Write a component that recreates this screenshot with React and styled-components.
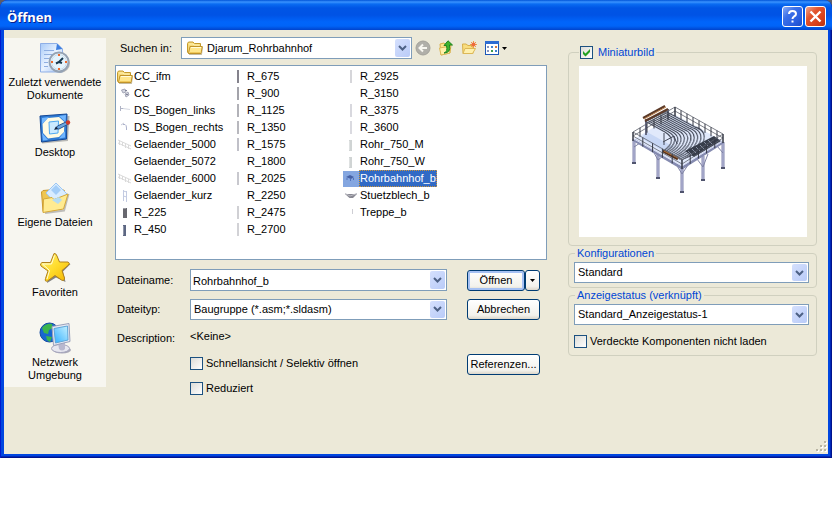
import { useState } from "react";
import styled, { createGlobalStyle } from "styled-components";

const places = [
  { label: 'Zuletzt verwendete Dokumente', icon: <RecentIcon /> },
  { label: 'Desktop', icon: <DesktopIcon /> },
  { label: 'Eigene Dateien', icon: <DocumentsIcon /> },
  { label: 'Favoriten', icon: <StarIcon /> },
  { label: 'Netzwerk Umgebung', icon: <NetworkIcon /> },
]

const files = [
  { name: 'CC_ifm', kind: 'folder' },
  { name: 'CC', kind: 'clip' },
  { name: 'DS_Bogen_links', kind: 'bendLeft' },
  { name: 'DS_Bogen_rechts', kind: 'bendRight' },
  { name: 'Gelaender_5000', kind: 'rail' },
  { name: 'Gelaender_5072' },
  { name: 'Gelaender_6000', kind: 'rail' },
  { name: 'Gelaender_kurz', kind: 'shortRail' },
  { name: 'R_225', kind: 'block' },
  { name: 'R_450', kind: 'pipe', color: '#5d6783' },
  { name: 'R_675', kind: 'bar', color: '#84828c' },
  { name: 'R_900', kind: 'bar', color: '#a3a3aa' },
  { name: 'R_1125', kind: 'bar', color: '#b2b2b8' },
  { name: 'R_1350', kind: 'bar', color: '#b8b8be' },
  { name: 'R_1575', kind: 'bar', color: '#c0c0c8' },
  { name: 'R_1800' },
  { name: 'R_2025', kind: 'bar', color: '#c8c8ce' },
  { name: 'R_2250' },
  { name: 'R_2475', kind: 'bar', color: '#d0d0d4' },
  { name: 'R_2700', kind: 'bar', color: '#d2d2d6' },
  { name: 'R_2925', kind: 'bar', color: '#d6d6da' },
  { name: 'R_3150' },
  { name: 'R_3375', kind: 'bar', color: '#d8d8de' },
  { name: 'R_3600', kind: 'bar', color: '#dadae0' },
  { name: 'Rohr_750_M', kind: 'pipe', color: '#d0d4d4' },
  { name: 'Rohr_750_W', kind: 'pipe', color: '#d0d4d4' },
  { name: 'Rohrbahnhof_b', kind: 'assembly' },
  { name: 'Stuetzblech_b', kind: 'plate' },
  { name: 'Treppe_b', kind: 'thin' },
]

function App() {
  const [selected, setSelected] = useState('Rohrbahnhof_b')
  const [fileName, setFileName] = useState('Rohrbahnhof_b')
  const [preview, setPreview] = useState(true)

  const pick = (name) => {
    setSelected(name)
    setFileName(name)
  }

  return (
    <>
      <GlobalStyle />
      <Backdrop>
        <Dialog role="dialog" aria-labelledby="title">
          <TitleBar>
            <Title id="title">Öffnen</Title>
            <CaptionButton type="button" aria-label="Hilfe">
              <svg width="19" height="19" viewBox="0 0 19 19" fill="none" stroke="#fff" strokeWidth="2">
                <path d="M6 7 Q6 4 9.500 4 Q13 4 13 7 Q13 8.500 11 9.500 Q9.500 10.500 9.500 12" />
                <path d="M9.500 13.500 V15.500" />
              </svg>
            </CaptionButton>
            <CaptionButton type="button" aria-label="Schließen" $close>
              <svg width="19" height="19" viewBox="0 0 19 19" stroke="#fff" strokeWidth="2.400">
                <path d="M4.500 4.500 L14.500 14.500 M14.500 4.500 L4.500 14.500" />
              </svg>
            </CaptionButton>
          </TitleBar>
          <Content>
            <PlacesBar>
              {places.map((place) => (
                <Place key={place.label} type="button">
                  {place.icon}
                  <span>{place.label}</span>
                </Place>
              ))}
            </PlacesBar>

            <Main>
              <LookInRow>
                <LookInLabel htmlFor="lookin">Suchen in:</LookInLabel>
                <ComboBox $grow>
                  <Select id="lookin" $withIcon>
                    <option>Djarum_Rohrbahnhof</option>
                  </Select>
                  <ComboIcon><FolderIcon /></ComboIcon>
                  <Arrow />
                </ComboBox>
                <Tools>
                  <ToolButton type="button" aria-label="Zurück"><BackIcon /></ToolButton>
                  <ToolButton type="button" aria-label="Übergeordneter Ordner"><UpIcon /></ToolButton>
                  <ToolButton type="button" aria-label="Neuer Ordner"><NewFolderIcon /></ToolButton>
                  <ToolButton type="button" aria-label="Ansicht"><ViewIcon /></ToolButton>
                </Tools>
              </LookInRow>

              <FileList>
                {files.map((file) => (
                  <li key={file.name}>
                    <FileButton type="button" onClick={() => pick(file.name)}>
                      <FileIcon kind={file.kind} color={file.color} />
                      <FileName $selected={file.name === selected}>{file.name}</FileName>
                    </FileButton>
                  </li>
                ))}
              </FileList>

              <Form>
                <label htmlFor="filename">Dateiname:</label>
                <ComboBox $tall>
                  <TextInput id="filename" value={fileName} onChange={(e) => setFileName(e.target.value)} />
                  <Arrow />
                </ComboBox>
                <SplitButton>
                  <Button type="button" $primary>Öffnen</Button>
                  <Button type="button" aria-label="Weitere Optionen">
                    <svg width="5" height="3" viewBox="0 0 5 3"><path d="M0 0 H5 L2.500 3 Z" /></svg>
                  </Button>
                </SplitButton>

                <label htmlFor="filetype">Dateityp:</label>
                <ComboBox>
                  <Select id="filetype">
                    <option>Baugruppe (*.asm;*.sldasm)</option>
                  </Select>
                  <Arrow />
                </ComboBox>
                <Button type="button">Abbrechen</Button>

                <DescriptionLabel>Description:</DescriptionLabel>
                <Description>&lt;Keine&gt;</Description>

                <QuickRow>
                  <CheckLabel>
                    <Checkbox />
                    Schnellansicht / Selektiv öffnen
                  </CheckLabel>
                </QuickRow>
                <ReferenceButton type="button">Referenzen...</ReferenceButton>

                <CheckLabel $indent>
                  <Checkbox />
                  Reduziert
                </CheckLabel>
              </Form>
            </Main>

            <Side>
              <Group $preview>
                <Legend $check>
                  <CheckLabel>
                    <Checkbox checked={preview} onChange={() => setPreview(!preview)} />
                    Miniaturbild
                  </CheckLabel>
                </Legend>
                <Preview>{preview && <PlatformDrawing />}</Preview>
              </Group>
              <Group>
                <Legend id="config">Konfigurationen</Legend>
                <ComboBox>
                  <Select aria-labelledby="config">
                    <option>Standard</option>
                  </Select>
                  <Arrow />
                </ComboBox>
              </Group>
              <Group $roomy>
                <Legend id="display">Anzeigestatus (verknüpft)</Legend>
                <ComboBox>
                  <Select aria-labelledby="display">
                    <option>Standard_Anzeigestatus-1</option>
                  </Select>
                  <Arrow />
                </ComboBox>
                <CheckLabel>
                  <Checkbox />
                  Verdeckte Komponenten nicht laden
                </CheckLabel>
              </Group>
            </Side>
          </Content>
          <Grip width="12" height="12" viewBox="0 0 12 12">
            {[[8, 0], [4, 4], [8, 4], [0, 8], [4, 8], [8, 8]].map(([x, y]) => (
              <g key={`${x}-${y}`}>
                <rect x={x + 1} y={y + 1} width="2" height="2" fill="#fff" />
                <rect x={x} y={y} width="2" height="2" fill="#b8b4a2" />
              </g>
            ))}
          </Grip>
        </Dialog>
      </Backdrop>
    </>
  )
}

function Checkbox(props) {
  return (
    <Box>
      <input type="checkbox" {...props} />
      <svg width="11" height="11" viewBox="0 0 11 11">
        <path d="M2 4 L4.500 6.500 L9 2 V5 L4.500 9.500 L2 7 Z" fill="#21a121" />
      </svg>
    </Box>
  )
}

function Arrow() {
  return (
    <ArrowBox aria-hidden="true">
      <svg width="9" height="6" viewBox="0 0 9 6" fill="none" stroke="#4d6185" strokeWidth="2">
        <path d="M1 1 L4.500 4.500 L8 1" />
      </svg>
    </ArrowBox>
  )
}

function FolderIcon() {
  return (
    <svg width="16" height="16" viewBox="0 0 16 16">
      <path d="M2 14.500 H14.500 L15.500 7" fill="none" stroke="#8b7a45" opacity=".5" />
      <path d="M.5 3.500 L1.500 2 H6 L7.500 3.500 H13.500 V6 L13 13.500 H1.500 L.5 12 Z" fill="#f6d978" stroke="#c49a2c" />
      <path d="M2 4 H6 L7 5 H12.500" fill="none" stroke="#fff3b5" />
      <path d="M3 6.500 H15.300 L14 13.500 H1.500 Z" fill="#ffe68b" stroke="#c0932a" />
      <path d="M4 7.500 H14" stroke="#fffbd9" />
      <path d="M3 12.500 H13" stroke="#f0c95a" />
    </svg>
  )
}

// small part thumbnails in the file list
function FileIcon({ kind, color }) {
  const drawings = {
    clip: (
      <g fill="none" stroke="#a5a8b8">
        <path d="M4.500 4 L8 3 L9 6 L6 7 Z M8 8 L11 6 L12 9 L9 11 Z" fill="#d3d5df" />
        <path d="M8 4.500 H10 M9 8.500 H11" stroke="#7f8296" />
      </g>
    ),
    bendLeft: (
      <g fill="none">
        <path d="M3.500 3 V8 M4 5.500 H7" stroke="#b0b4c6" />
        <path d="M6 5.500 L13 6.500" stroke="#d5d8e2" />
      </g>
    ),
    bendRight: (
      <g fill="none">
        <path d="M4 5 L7 3" stroke="#c6c9d6" />
        <path d="M6 4.500 H8 Q9.500 5 9.500 8 V10" stroke="#acb2cc" />
      </g>
    ),
    rail: (
      <g fill="none" stroke="#dadada">
        <path d="M1 3 L14 9 M1 6 L14 12" />
        <path d="M2.500 3 V8 M5.500 5 V9 M8.500 6 V11 M11.500 8 V12" />
      </g>
    ),
    shortRail: (
      <g fill="none" stroke="#c3cbe2">
        <path d="M6.500 2 V13 M9.500 3 V14 M6 3 L10 4 M6 8 L10 9" />
      </g>
    ),
    block: (
      <g>
        <rect x="6" y="3" width="4" height="10" fill="#68686f" />
        <path d="M6 3.500 H9" stroke="#9b9ba3" />
      </g>
    ),
    pipe: (
      <g>
        <rect x="6" y="3" width="3" height="11" fill={color} />
        <path d="M6.500 4 V13" stroke="#fff" opacity=".3" />
      </g>
    ),
    bar: <rect x="7" y="1" width="2" height="13" fill={color} />,
    assembly: (
      <g>
        <rect width="16" height="16" fill="#84a6e0" />
        <path d="M3 6 L7 4 L11 6 L8 8 Z" fill="#4661a5" />
        <path d="M4 7 V9 M7.500 8 V10 M10.500 7 V9" stroke="#5272ba" />
      </g>
    ),
    plate: (
      <g>
        <path d="M2 6 H14 L10 10 H6.500 Z" fill="#898993" />
        <path d="M2 5.500 L7 8 L14 5.500" fill="none" stroke="#bcbcc4" />
      </g>
    ),
    thin: <path d="M9.500 4 V9" stroke="#ceced4" />,
  }

  if (kind === 'folder') return <FolderIcon />
  return <svg width="16" height="16" viewBox="0 0 16 16" aria-hidden="true">{drawings[kind]}</svg>
}

function BackIcon() {
  return (
    <svg width="16" height="16" viewBox="0 0 16 16">
      <circle cx="8" cy="8" r="7" fill="#b0afa9" stroke="#a3a29b" />
      <path d="M12 8 H5 M8 4.500 L4.500 8 L8 11.500" fill="none" stroke="#f7f6f0" strokeWidth="2" />
    </svg>
  )
}

function UpIcon() {
  return (
    <svg width="16" height="16" viewBox="0 0 16 16">
      <path d="M2 4 L6 3 L8 5 L13 5 L12 13 L3 15 Z" fill="#fbe58d" stroke="#d8b04a" />
      <path d="M1.500 8 L10 6.500 L12 13 L3 15 Z" fill="#fff0a8" stroke="#dcb858" />
      <path d="M6 13 Q10 12 8.500 5.500 H6 L10 .8 L14.500 5 H11.500 Q13 13 6 13 Z" fill="#3fb42e" stroke="#1d8420" />
    </svg>
  )
}

function NewFolderIcon() {
  return (
    <svg width="16" height="16" viewBox="0 0 16 16">
      <path d="M1.500 4 H5 L7 5.500 H12 V13.500 H2 Z" fill="#f8dd7e" stroke="#d8b04a" />
      <path d="M4 8.500 H14.500 L11.500 13.500 H2 Z" fill="#fff0ad" stroke="#dcb858" />
      <path d="M12.500 1 V8 M9 4.500 H16 M10 2 L15 7 M15 2 L10 7" stroke="#f19a4b" />
      <circle cx="12.500" cy="4.500" r="2" fill="#ee6a3d" />
    </svg>
  )
}

function ViewIcon() {
  return (
    <svg width="24" height="16" viewBox="0 0 24 16">
      <rect x="1.500" y="1.500" width="13" height="13" fill="#fff" stroke="#1c57b8" />
      <rect x="1" y="1" width="14" height="3" fill="#2d6cd2" />
      <path d="M3 6 h2 v2 h-2z M3 10 h2 v2 h-2z" fill="#8795bd" />
      <path d="M7 6 h2 v2 h-2z M11 10 h2 v2 h-2z" fill="#3f82cf" />
      <path d="M11 6 h2 v2 h-2z" fill="#d67a3f" />
      <path d="M7 10 h2 v2 h-2z" fill="#3c9a4a" />
      <path d="M18 7 H23 L20.500 10 Z" fill="#000" />
    </svg>
  )
}

function RecentIcon() {
  return (
    <svg width="32" height="32" viewBox="0 0 32 32">
      <defs>
        <linearGradient id="paper" x1="0" y1="0" x2="1" y2="1">
          <stop offset="0" stopColor="#a9cbf8" />
          <stop offset=".5" stopColor="#eaf3ff" />
          <stop offset="1" stopColor="#9abcf0" />
        </linearGradient>
      </defs>
      <path d="M1.500 1.500 H18 L23.500 7 V30 H1.500 Z" fill="url(#paper)" stroke="#8fafe6" />
      <path d="M18 1.500 L17 8 L23.500 7 Z" fill="#3e7fe0" />
      <path d="M5 8.500 H15 M5 12.500 H13 M5 16.500 H10 M5 20.500 H9 M5 24.500 H9" stroke="#8faee0" />
      <circle cx="21" cy="21" r="10" fill="#74757c" opacity=".5" />
      <circle cx="20" cy="20" r="9.500" fill="#f5fafd" stroke="#95a3b4" strokeWidth="2" />
      <circle cx="20" cy="20" r="7.500" fill="#e5f4fd" stroke="#c7dceb" />
      <path d="M20 12 V14 M20 26 V28 M12 20 H14 M26 20 H28" stroke="#ef6a2d" strokeWidth="2" />
      <path d="M17 21.500 L20 20 L24 16 M20 20 L23 21" fill="none" stroke="#17384e" strokeWidth="2" />
    </svg>
  )
}

function DesktopIcon() {
  return (
    <svg width="32" height="32" viewBox="0 0 32 32">
      <path d="M3 30.500 L28 28 L29.500 4" fill="none" stroke="#777" strokeWidth="2" opacity=".5" />
      <path d="M1 4 L28 2 L27.500 27 L2.500 30 Z" fill="#2f7bd3" stroke="#124796" />
      <path d="M3 6 L10 5 L3 12 Z M20 4 L27 3 L26.500 10 Z M3 21 L9 28 L4 28.500 Z M26 19 L26 25.500 L20 26.500 Z" fill="#71b6ff" />
      <path d="M9 6 L20 5 L25.500 10 L25 20 L20 25 L9 26.500 L4 21 L3.500 12 Z" fill="#fffbe3" />
      <path d="M10 10 L19.500 9 L19 21 L10.500 22 Z" fill="#cbeaff" stroke="#4fa8f0" />
      <path d="M16 17 L18.500 14 L28 9.500 L29.500 12 L20 17 Z" fill="#6aa6e0" stroke="#2b548e" />
      <path d="M15 18 L17 14.500 L19 16.500 Z" fill="#16253d" />
      <circle cx="29" cy="10.500" r="2.200" fill="#ce3b2c" />
    </svg>
  )
}

function DocumentsIcon() {
  return (
    <svg width="32" height="32" viewBox="0 0 32 32">
      <path d="M6 31 L25 28.500 L29.500 12" fill="none" stroke="#777" strokeWidth="2" opacity=".45" />
      <path d="M2.500 10 L4 8.500 L10 8 L12 10 L25 8 L27 14 L23 27 L4 29.500 Z" fill="#efc651" stroke="#c9972e" />
      <path d="M17 1 L28 12 L17 22 L7 11 Z" fill="#d8ecff" stroke="#9cc6f3" />
      <path d="M17 3 L22 8 L17 13 L12 8 Z" fill="#a3cdf8" />
      <path d="M4.500 17 L13 15.500 L15 17.500 L29 12 L24.500 27 L4 30.500 Z" fill="#ffeb91" stroke="#d6a93a" />
      <path d="M13 18 L20 15 L23 18 L19 22 Z" fill="#b4dcf2" />
    </svg>
  )
}

function StarIcon() {
  return (
    <svg width="32" height="32" viewBox="0 0 32 32">
      <defs>
        <linearGradient id="gold" x1="0" y1="0" x2="1" y2="1">
          <stop offset="0" stopColor="#fff27a" />
          <stop offset=".5" stopColor="#ffdc2c" />
          <stop offset="1" stopColor="#f2b200" />
        </linearGradient>
      </defs>
      <path d="M17 3 L21 11 L31.500 12 L24 19.500 L26.500 30 L17 25.500 L8 31 L10 20 L3 13 L13 12 Z" fill="#333" opacity=".6" />
      <path d="M15 1.500 Q17 1 18 4 L20.500 10 L29 10 Q31.500 11 29.500 13 L23 18.500 L25.500 26 Q25.500 29.500 22.500 28 L16 23.500 L8.500 29 Q5.500 30 6.500 26.500 L9 19 L2 14 Q.5 11.500 3 10.500 L11.500 10.500 Z" fill="url(#gold)" stroke="#b1811c" strokeLinejoin="round" />
      <path d="M15.500 3.500 L12.500 12 L3.500 12 L10.500 18.500 L8 27" fill="none" stroke="#fffde0" />
    </svg>
  )
}

function NetworkIcon() {
  return (
    <svg width="32" height="32" viewBox="0 0 32 32">
      <defs>
        <linearGradient id="screen" x1="0" y1="1" x2="1" y2="0">
          <stop offset="0" stopColor="#33b1ff" />
          <stop offset="1" stopColor="#c7f1ff" />
        </linearGradient>
      </defs>
      <circle cx="10.500" cy="10.500" r="9.500" fill="#1767cf" stroke="#1149a0" />
      <path d="M3 6 Q7 1 13 2 L14 6 L10 8 L9 12 L5 11 Z M7 14 L13 15 L11 20 L8 18 Z" fill="#3bb54c" />
      <ellipse cx="23" cy="28" rx="9" ry="3.500" fill="#a9a9b8" />
      <ellipse cx="21.500" cy="26.500" rx="9" ry="4" fill="#e7e7f0" stroke="#a4a4bc" />
      <path d="M19 20 L26 20 L26 27 Q23 30 20 27 Z" fill="#b8b8cf" />
      <path d="M13 4.500 L30 1.500 L31 19.500 L14.500 23.500 Z" fill="#e8e9f3" stroke="#9aa1bb" />
      <path d="M15 6.500 L28.500 4 L29 18 L16.500 21 Z" fill="url(#screen)" stroke="#5ea6d8" />
    </svg>
  )
}

function PlatformDrawing() {
  // nested u-shaped pipe runs, inner to outer
  const pipes = Array.from({ length: 11 }, (_, i) => {
    const x = 25 + i * 2
    const y = 30 - i
    const mx = x + 20 + i
    const my = y + 11 + i * 0.5
    const ex = 43 + i * 1.8
    const ey = 60 + i * 0.9
    return `M${x} ${y} L${mx} ${my} C${mx + 8 + i} ${my + 5} ${ex + 12 + i} ${ey - 8} ${ex} ${ey}`
  })
  const edges = [
    [13, 41, 55, 16, 6],
    [55, 16, 103, 43, 8],
    [13, 41, 62, 69, 5],
    [62, 69, 103, 43, 5],
  ]
  const legs = [[14, 48, 72], [38, 63, 87], [62, 75, 101], [83, 65, 89], [103, 51, 77]]

  return (
    <svg width="140" height="122" viewBox="3 0 140 122" fill="none" role="img" aria-label="Rohrbahnhof_b">
      <path d="M14 48 L55 24 L103 50 L62 76 Z" fill="#e1e9fb" />
      <path d="M21 47 L27 41 L54 56 L43 60 Z" fill="#c8d7f5" />
      {legs.map(([x, top, bottom]) => (
        <g key={x}>
          <path d={`M${x} ${top} V${bottom}`} stroke="#8184ac" strokeWidth="3" />
          <path d={`M${x} ${top} V${bottom}`} stroke="#c2c5e2" />
          <path d={`M${x - 2} ${bottom} H${x + 2}`} stroke="#50546e" strokeWidth="2" />
        </g>
      ))}
      <path d="M33 60 L38 69 L43 65 M56 73 L62 83 L68 74 M77 68 L83 76 L88 63 M97 55 L103 62 M14 56 L20 52" stroke="#7e82a4" />
      <path d="M26 28 V44 M48 18 V28" stroke="#666981" strokeWidth="2" />
      {pipes.map((d) => (
        <g key={d}>
          <path d={d} stroke="#474d5c" strokeWidth="1.300" />
          <path d={d} stroke="#ccd6ea" strokeWidth=".5" transform="translate(.5 -.8)" />
        </g>
      ))}
      <path d="M43 51 L54 45 L57 53 M44 42 V54" stroke="#424858" />
      <path d="M65 60 L94 45 L101 50 L74 66 Z" fill="#373d4a" />
      <path d="M68 60 l4 4 M72 58 l4 4 M76 56 l4 4 M80 54 l4 4 M84 51 l4 4 M88 49 l4 4" stroke="#858ca0" />
      <path d="M23 27 L45 15 M25 30 L48 18" stroke="#5c3a28" strokeWidth="2" />
      <path d="M24 28 L46 16" stroke="#b77a43" />
      <path d="M43 60 L58 68" stroke="#55331e" strokeWidth="3" />
      <path d="M44 60 L58 67" stroke="#bd783b" />
      <path d="M14 49 L62 77 L103 51" stroke="#858bb0" strokeWidth="3" />
      <path d="M14 48 L62 75 L103 50" stroke="#dbe1f7" />
      {edges.map(([x1, y1, x2, y2, n]) => (
        <g key={`${x1}-${x2}-${y2}`} stroke="#5d616c">
          <path d={`M${x1} ${y1} L${x2} ${y2} M${x1} ${y1 + 4} L${x2} ${y2 + 4}`} strokeWidth=".8" />
          {Array.from({ length: n + 1 }, (_, i) => {
            const x = x1 + ((x2 - x1) * i) / n
            const y = y1 + ((y2 - y1) * i) / n
            return <path key={i} d={`M${x} ${y} v9`} stroke="#343844" />
          })}
        </g>
      ))}
    </svg>
  )
}

const GlobalStyle = createGlobalStyle`
  * {
    box-sizing: border-box;
  }

  body {
    margin: 0;
    background: #fff;
    color: #000;
    font: 11px/13px "Liberation Sans", Arial, sans-serif;
  }

  button, input, select {
    font: inherit;
    color: inherit;
  }

  svg {
    display: block;
    flex: none;
  }
`;

const Backdrop = styled.div`
  margin-right: 8px;
  background: #5c5c68;
`;

const Dialog = styled.div`
  position: relative;
  padding: 0 4px 4px;
  border-radius: 8px 8px 0 0;
  background: #0046e0;
  box-shadow: inset 1px 0 #0019cf, inset -1px -1px #00138c, inset -2px -2px #0028b8;
`;

const TitleBar = styled.header`
  display: flex;
  align-items: center;
  gap: 2px;
  height: 30px;
  margin: 0 -4px;
  padding: 3px 6px 0 7px;
  border-radius: 8px 8px 0 0;
  background: linear-gradient(#0054d8 0, #3a93ff 2px, #0a6cf2 4px, #0055e5 8px, #0053e5 15px, #0065fb 22px, #0064f8 26px, #0043cc 30px);
`;

const Title = styled.h1`
  flex: 1;
  margin: 0;
  color: #fff;
  font: bold 13px/18px "Noto Sans", sans-serif;
  text-shadow: 1px 1px #0a1f8c;
`;

const CaptionButton = styled.button`
  width: 21px;
  height: 21px;
  padding: 0;
  border: 1px solid #fff;
  border-radius: 3px;
  background: ${props => props.$close
    ? 'linear-gradient(135deg, #f0a48c, #e2552e 35%, #d8401c 70%, #b8340f)'
    : 'linear-gradient(135deg, #8aacf5, #3c70e8 35%, #2a5fe0 70%, #1c4cc8)'};
`;

const Content = styled.div`
  display: grid;
  grid-template-columns: 102px minmax(0, 1fr) minmax(0, 249px);
  align-items: start;
  padding: 7px 11px 59px 0;
  background: #ece9d8;
`;

const PlacesBar = styled.nav`
  display: flex;
  flex-direction: column;
  gap: 10px;
  margin-top: 1px;
  padding: 4px 0 5px;
  background: #f7f6f0;
`;

const Place = styled.button`
  display: flex;
  flex-direction: column;
  align-items: center;
  gap: 2px;
  min-height: 60px;
  padding: 0 2px;
  border: 0;
  background: none;
  text-align: center;
`;

const Main = styled.main`
  padding: 0 21px 0 9px;
`;

const LookInRow = styled.div`
  display: flex;
  align-items: center;
  padding-left: 5px;
`;

const LookInLabel = styled.label`
  width: 61px;
`;

const ComboBox = styled.div`
  position: relative;
  flex: ${props => props.$grow ? 1 : 'none'};
  height: ${props => props.$tall || props.$grow ? 22 : 21}px;
`;

const Select = styled.select`
  appearance: none;
  display: block;
  width: 100%;
  height: 100%;
  padding: 0 20px 0 ${props => props.$withIcon ? 25 : 3}px;
  border: 1px solid #7f9db9;
  border-radius: 0;
  background: #fff;
`;

const TextInput = styled.input`
  display: block;
  width: 100%;
  height: 100%;
  padding: 1px 20px 0 2px;
  border: 1px solid #7f9db9;
  background: #fff;
`;

const ComboIcon = styled.span`
  position: absolute;
  top: 3px;
  left: 6px;
  pointer-events: none;
`;

const ArrowBox = styled.span`
  position: absolute;
  top: 2px;
  right: 2px;
  bottom: 2px;
  width: 15px;
  display: grid;
  place-items: center;
  border-radius: 2px;
  background: linear-gradient(135deg, #d5e0fd, #b9cbf8);
  pointer-events: none;
`;

const Tools = styled.div`
  display: flex;
  gap: 7px;
  width: 135px;
  padding-left: 3px;
`;

const ToolButton = styled.button`
  padding: 0;
  border: 0;
  background: none;
`;

const FileList = styled.ul`
  display: grid;
  grid-template-rows: repeat(10, 17px);
  grid-auto-flow: column;
  grid-auto-columns: 113px;
  min-height: 195px;
  margin: 6px 0 9px;
  padding: 2px 1px;
  border: 1px solid #7f9db9;
  background: #fff;
  list-style: none;
`;

const FileButton = styled.button`
  display: flex;
  align-items: center;
  height: 17px;
  padding: 0;
  border: 0;
  background: none;
  white-space: nowrap;
`;

const FileName = styled.span`
  padding: 1px;
  line-height: 15px;
  color: ${props => props.$selected ? '#fff' : '#000'};
  background: ${props => props.$selected ? '#316ac5' : 'none'};
  outline: ${props => props.$selected ? '1px dotted #ce953a' : 'none'};
  outline-offset: -1px;
`;

const Form = styled.form`
  display: grid;
  grid-template-columns: 73px minmax(0, 1fr) 73px;
  grid-template-rows: 22px 22px 18px 23px auto;
  row-gap: 7px;
  align-items: center;
  padding: 0 7px 0 2px;

  > ${ComboBox} {
    margin-right: 20px;
  }
`;

const DescriptionLabel = styled.span`
  align-self: end;
`;

const Description = styled.output`
  grid-column: 2 / -1;
`;

const QuickRow = styled.div`
  grid-column: 2;
`;

const CheckLabel = styled.label`
  display: flex;
  align-items: center;
  gap: 3px;
  grid-column: ${props => props.$indent ? '2' : 'auto'};
  white-space: nowrap;
`;

const Box = styled.span`
  display: grid;
  flex: none;

  input, svg {
    grid-area: 1 / 1;
  }

  input {
    appearance: none;
    width: 13px;
    height: 13px;
    margin: 0;
    border: 1px solid #1c5180;
    background: linear-gradient(135deg, #dcdcd7, #fff);
  }

  svg {
    visibility: hidden;
    place-self: center;
    pointer-events: none;
  }

  input:checked + svg {
    visibility: visible;
  }
`;

const Button = styled.button`
  display: grid;
  place-items: center;
  height: 21px;
  padding: 0;
  border: 1px solid #003c74;
  border-radius: 3px;
  background: linear-gradient(#fff, #f3f2ec 80%, #dcd7cb);
  box-shadow: ${props => props.$primary ? 'inset 0 0 0 2px #a6c1f3, inset 0 -2px #6f8fe0' : 'none'};
`;

const ReferenceButton = styled(Button)`
  align-self: end;
`;

const SplitButton = styled.div`
  display: grid;
  grid-template-columns: 58px 15px;
`;

const Side = styled.aside`
  padding-top: 8px;
`;

const Group = styled.fieldset`
  min-width: 0;
  margin: 0;
  padding: ${props => props.$preview ? '7px 9px 8px 10px' : props.$roomy ? '2px 7px 7px 5px' : '2px 7px 4px 5px'};
  border: 1px solid #d0d0bf;
  border-radius: 4px;

  > div + label {
    margin-top: 10px;
  }
`;

const Legend = styled.legend`
  margin-left: ${props => props.$check ? 0 : 1}px;
  padding: 0 2px 0 ${props => props.$check ? 1 : 2}px;
  color: #0046d5;
  line-height: 14px;

  label {
    gap: 5px;
  }
`;

const Preview = styled.div`
  display: grid;
  place-items: center;
  min-height: 171px;
  background: #fff;
`;

const Grip = styled.svg`
  position: absolute;
  right: 4px;
  bottom: 5px;
`;

export default App
